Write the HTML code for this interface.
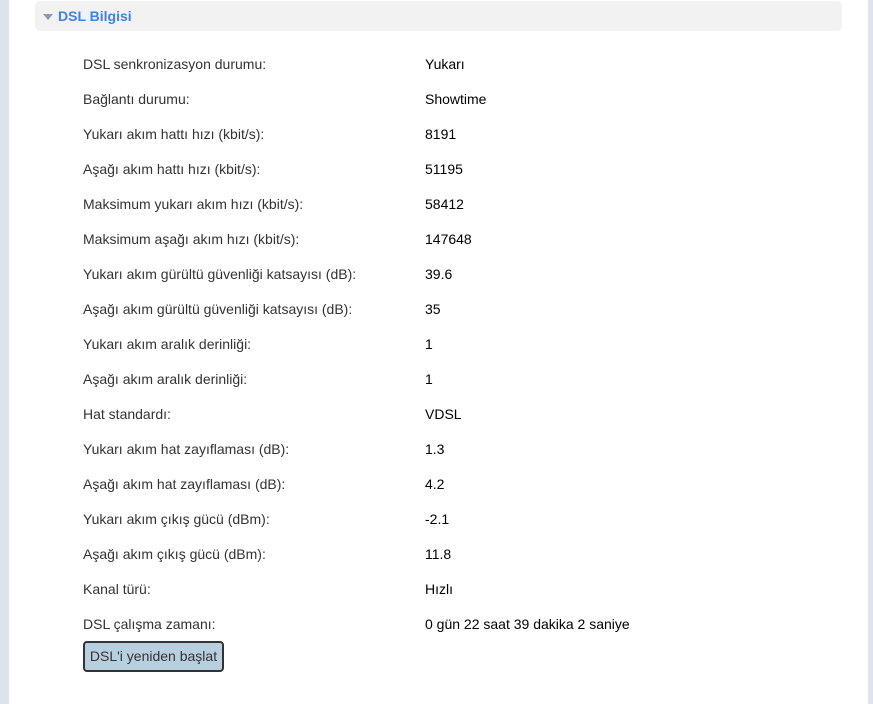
<!DOCTYPE html>
<html><head><meta charset="utf-8"><style>
body{margin:0;width:873px;height:704px;background:#fff;position:relative;font-family:"Liberation Sans",Arial,sans-serif;overflow:hidden}
.l{position:absolute;left:0;top:0;width:9px;height:704px;background:#dde3ec}
.r{position:absolute;left:868px;top:0;width:5px;height:704px;background:#dde3ec}
.h{position:absolute;left:35px;top:1px;width:807px;height:30px;background:#f2f2f2;border-radius:5px}
.tri{position:absolute;left:43px;top:14px;width:0;height:0;border-left:5px solid transparent;border-right:5px solid transparent;border-top:6px solid #8a9aaa}
.t{position:absolute;left:58px;top:8px;font-size:14px;font-weight:bold;color:#3f7fef}
.row{position:absolute;left:83px;font-size:14px;color:#333;height:20px;line-height:20px}
.v{position:absolute;left:425px;font-size:14px;color:#000;height:20px;line-height:20px}
.btn{position:absolute;left:83px;top:641px;width:137px;height:27px;border:2px solid #333;border-radius:4px;background:#b8cfe0;font-size:14px;color:#333;line-height:27px;text-align:center;box-sizing:content-box;width:137px}
</style></head><body>
<div class="l"></div><div class="r"></div>
<div class="h"></div><div class="tri"></div><div class="t">DSL Bilgisi</div>
<div class="row" style="top:54px">DSL senkronizasyon durumu:</div><div class="v" style="top:54px">Yukarı</div>
<div class="row" style="top:89px">Bağlantı durumu:</div><div class="v" style="top:89px">Showtime</div>
<div class="row" style="top:124px">Yukarı akım hattı hızı (kbit/s):</div><div class="v" style="top:124px">8191</div>
<div class="row" style="top:159px">Aşağı akım hattı hızı (kbit/s):</div><div class="v" style="top:159px">51195</div>
<div class="row" style="top:194px">Maksimum yukarı akım hızı (kbit/s):</div><div class="v" style="top:194px">58412</div>
<div class="row" style="top:229px">Maksimum aşağı akım hızı (kbit/s):</div><div class="v" style="top:229px">147648</div>
<div class="row" style="top:264px">Yukarı akım gürültü güvenliği katsayısı (dB):</div><div class="v" style="top:264px">39.6</div>
<div class="row" style="top:299px">Aşağı akım gürültü güvenliği katsayısı (dB):</div><div class="v" style="top:299px">35</div>
<div class="row" style="top:334px">Yukarı akım aralık derinliği:</div><div class="v" style="top:334px">1</div>
<div class="row" style="top:369px">Aşağı akım aralık derinliği:</div><div class="v" style="top:369px">1</div>
<div class="row" style="top:404px">Hat standardı:</div><div class="v" style="top:404px">VDSL</div>
<div class="row" style="top:439px">Yukarı akım hat zayıflaması (dB):</div><div class="v" style="top:439px">1.3</div>
<div class="row" style="top:474px">Aşağı akım hat zayıflaması (dB):</div><div class="v" style="top:474px">4.2</div>
<div class="row" style="top:509px">Yukarı akım çıkış gücü (dBm):</div><div class="v" style="top:509px">-2.1</div>
<div class="row" style="top:544px">Aşağı akım çıkış gücü (dBm):</div><div class="v" style="top:544px">11.8</div>
<div class="row" style="top:579px">Kanal türü:</div><div class="v" style="top:579px">Hızlı</div>
<div class="row" style="top:614px">DSL çalışma zamanı:</div><div class="v" style="top:614px">0 gün 22 saat 39 dakika 2 saniye</div>
<div class="btn">DSL'i yeniden başlat</div>
</body></html>
